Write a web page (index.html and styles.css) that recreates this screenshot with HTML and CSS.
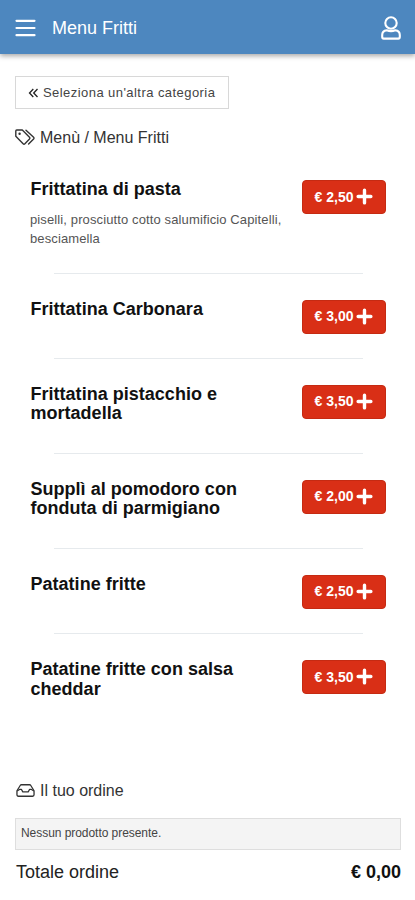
FILE: index.html
```html
<!DOCTYPE html>
<html lang="it">
<head>
<meta charset="utf-8">
<meta name="viewport" content="width=device-width, initial-scale=1">
<title>Menu Fritti</title>
<link rel="stylesheet" href="styles.css">
</head>
<body>
<svg class="defs" width="0" height="0" aria-hidden="true">
  <symbol id="plus" viewBox="0 0 16 16"><path d="M8 2v12M2 8h12" fill="none" stroke="currentColor" stroke-width="3.2" stroke-linecap="round"/></symbol>
</svg>
<header class="topbar">
  <svg class="burger" viewBox="0 0 20 18"><path d="M1 1.8h18M1 9h18M1 16.200h18" fill="none" stroke="currentColor" stroke-width="2.2" stroke-linecap="round"/></svg>
  <h1 class="topbar-title">Menu Fritti</h1>
  <svg class="user" viewBox="0 0 20 24"><g fill="none" stroke="currentColor" stroke-width="2.1"><circle cx="10" cy="7" r="5.700"/><path d="M5.700 14.200C3 14.500 1.200 16.500 1.200 19v2.100c0 .9.600 1.500 1.500 1.500h14.600c.9 0 1.500-.6 1.500-1.500V19c0-2.500-1.800-4.500-4.500-4.800-1.500.6-2.700.9-4.300.9s-2.800-.3-4.300-.9z" stroke-linejoin="round"/></g></svg>
</header>
<main>
  <a class="back"><svg class="chevrons" viewBox="0 0 10 10"><path d="M4.800 1 1 5l3.800 4M9 1 5.200 5 9 9" fill="none" stroke="currentColor" stroke-width="1.300"/></svg><span>Seleziona un'altra categoria</span></a>
  <h2 class="heading"><svg class="tags" viewBox="0 0 20 16"><g fill="none" stroke="currentColor" stroke-width="1.400" stroke-linejoin="round" stroke-linecap="round"><path d="M.8 2v5.300l7.300 7.400c.6.600 1.200.6 1.800 0l4.600-4.800c.5-.6.5-1.200 0-1.700L7.300 1H1.700C1.100 1 .8 1.400.8 2z"/><path d="M11 1.200l7.600 7.100c.5.500.5 1.100 0 1.700l-5 5"/></g><circle cx="4.600" cy="4.700" r="1.200" fill="currentColor"/></svg><span class="crumb">Menù / Menu Fritti</span></h2>
  <ul class="menu">
    <li class="item"><div class="info described"><h3>Frittatina di pasta</h3><p>piselli, prosciutto cotto salumificio Capitelli, besciamella</p></div><button class="add"><span>€ 2,50</span><svg><use href="#plus"/></svg></button></li>
    <li class="item"><div class="info"><h3>Frittatina Carbonara</h3></div><button class="add"><span>€ 3,00</span><svg><use href="#plus"/></svg></button></li>
    <li class="item"><div class="info"><h3>Frittatina pistacchio e mortadella</h3></div><button class="add"><span>€ 3,50</span><svg><use href="#plus"/></svg></button></li>
    <li class="item"><div class="info"><h3>Supplì al pomodoro con fonduta di parmigiano</h3></div><button class="add"><span>€ 2,00</span><svg><use href="#plus"/></svg></button></li>
    <li class="item"><div class="info"><h3>Patatine fritte</h3></div><button class="add"><span>€ 2,50</span><svg><use href="#plus"/></svg></button></li>
    <li class="item"><div class="info"><h3>Patatine fritte con salsa cheddar</h3></div><button class="add"><span>€ 3,50</span><svg><use href="#plus"/></svg></button></li>
  </ul>
  <section class="order">
    <h2 class="heading"><svg class="inbox" viewBox="0 0 20 14"><g fill="none" stroke="currentColor" stroke-width="1.400" stroke-linejoin="round"><path d="M.8 7.300 4.300 1.600c.3-.5.7-.8 1.300-.8h8.800c.6 0 1 .3 1.300.8l3.500 5.700v4.400c0 .9-.6 1.500-1.500 1.500H2.300c-.9 0-1.500-.6-1.500-1.500z"/><path d="M1 7.500 4 5.700h1.500l1.600 2.800h5.800l1.600-2.800H16l3 1.800"/></g></svg><span class="order-title">Il tuo ordine</span></h2>
    <p class="empty">Nessun prodotto presente.</p>
    <div class="total"><span class="total-label">Totale ordine</span><strong>€ 0,00</strong></div>
  </section>
</main>
</body>
</html>
```
FILE: styles.css
```css
* { box-sizing: border-box; }
body, h1, h2, h3, p, ul { margin: 0; padding: 0; }
body { background: #fff; color: #222; font-family: "Liberation Sans", Arial, sans-serif; }
svg { display: block; flex: none; }
.defs { position: absolute; }
.topbar { display: flex; align-items: center; height: 54px; padding: 2px 14px 0 15px; background: #4d87bf; color: #fff; box-shadow: 0 2px 5px rgba(0, 0, 0, .35); }
.burger { width: 21px; height: 18px; }
.topbar-title { flex: 1; margin-left: 16px; font-size: 18px; font-weight: 400; line-height: 24px; }
.user { width: 20px; height: 24px; }
main { padding: 22px 14px 0 15px; }
.back { display: flex; align-items: center; gap: 4px; width: 214px; height: 33px; padding-left: 12px; border: 1px solid #d8d8d8; color: #444; font-size: 13px; letter-spacing: .44px; white-space: nowrap; }
.chevrons { width: 11px; height: 10px; color: #222; }
.heading { display: flex; align-items: center; gap: 5px; height: 20px; font-size: 16px; font-weight: 400; color: #333; white-space: nowrap; }
.back + .heading { margin-top: 18px; }
.crumb { padding-top: 1px; }
.tags { width: 20px; height: 16px; }
.inbox { width: 19px; height: 13px; margin-left: 1px; }
.menu { list-style: none; padding: 7px 15px 0 15px; }
.item { display: flex; align-items: flex-start; justify-content: space-between; flex-wrap: wrap; padding-top: 26px; }
.item:not(:last-child)::after { content: ""; width: 309px; height: 1px; margin: 24.4px auto 0; background: #e6eaed; }
.item:first-child::after { margin-top: 24px; }
.info { width: 256px; padding-bottom: 4.5px; }
.info.described { padding-bottom: 0; }
.info h3 { padding-left: .5px; font-size: 18px; line-height: 19.5px; letter-spacing: .02px; color: #111; }
.info p { width: 256px; margin-top: 10px; font-size: 13px; line-height: 19.5px; letter-spacing: .12px; color: #555; }
.add { display: flex; align-items: center; justify-content: center; gap: 3px; width: 84px; height: 34px; padding: 0 0 1px; border: 1px solid #c52a12; border-radius: 4px; background: #d92f16; color: #fff; font: bold 14px "Liberation Sans", Arial, sans-serif; white-space: nowrap; }
.add svg { width: 17px; height: 17px; }
.order { margin-top: 77px; }
.empty { height: 32px; margin-top: 17px; padding-left: 5px; border: 1px solid #dedede; background: #f4f4f4; color: #444; font-size: 12px; line-height: 29px; letter-spacing: -.05px; }
.total { display: flex; justify-content: space-between; margin-top: 10px; padding-left: 1px; font-size: 18px; line-height: 24px; color: #222; }
.total strong { color: #111; }
```
